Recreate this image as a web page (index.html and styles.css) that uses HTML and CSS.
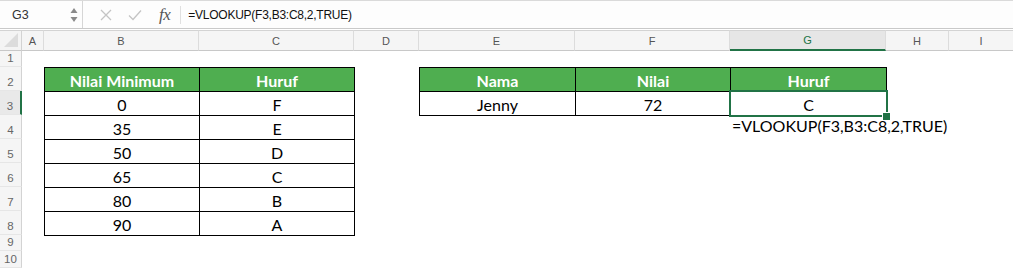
FILE: index.html
```html
<!DOCTYPE html>
<html lang="en">
<head>
  <meta charset="UTF-8" />
  <meta name="viewport" content="width=device-width, initial-scale=1" />
  <title>VLOOKUP - Nilai ke Huruf</title>
  <link rel="stylesheet" href="styles.css">
</head>
<body>
  <!-- Formula bar -->
  <div class="formula-bar">
    <div class="name-box">
      <span class="name">G3</span>
      <span class="spin">
        <svg width="8" height="16" viewBox="0 0 8 16"><path d="M4 1 L7.5 6 L0.5 6 Z" fill="#8a8a8a"/><path d="M4 15 L7.5 10 L0.5 10 Z" fill="#8a8a8a"/></svg>
      </span>
    </div>
    <div class="fb-tools">
      <svg class="tool" width="12" height="12" viewBox="0 0 12 12"><path d="M1 1 L11 11 M11 1 L1 11" stroke="#c4c4c4" stroke-width="1.3"/></svg>
      <svg class="tool" width="14" height="12" viewBox="0 0 14 12"><path d="M1 6.5 L5 10.5 L13 1.5" stroke="#c4c4c4" stroke-width="1.3" fill="none"/></svg>
      <span class="fx">fx</span>
    </div>
    <div class="formula">=VLOOKUP(F3,B3:C8,2,TRUE)</div>
  </div>

  <!-- Sheet -->
  <div class="sheet">
    <div class="corner"><svg width="14" height="14" viewBox="0 0 14 14"><path d="M14 0 L14 14 L0 14 Z" fill="#dcdcdc"/></svg></div>
    <div class="col-head">A</div>
    <div class="col-head">B</div>
    <div class="col-head">C</div>
    <div class="col-head">D</div>
    <div class="col-head">E</div>
    <div class="col-head">F</div>
    <div class="col-head active">G</div>
    <div class="col-head">H</div>
    <div class="col-head last">I</div>

    <div class="row-head r1">1</div>
    <div class="row-head r2">2</div>
    <div class="row-head r3 active">3</div>
    <div class="row-head r4">4</div>
    <div class="row-head r5">5</div>
    <div class="row-head r6">6</div>
    <div class="row-head r7">7</div>
    <div class="row-head r8">8</div>
    <div class="row-head r9">9</div>
    <div class="row-head r10">10</div>

    <div class="grade-table">
      <div class="th">Nilai Minimum</div><div class="th">Huruf</div>
      <div class="td">0</div><div class="td">F</div>
      <div class="td">35</div><div class="td">E</div>
      <div class="td">50</div><div class="td">D</div>
      <div class="td">65</div><div class="td">C</div>
      <div class="td">80</div><div class="td">B</div>
      <div class="td">90</div><div class="td">A</div>
    </div>

    <div class="lookup-table">
      <div class="th">Nama</div><div class="th">Nilai</div><div class="th">Huruf</div>
      <div class="td">Jenny</div><div class="td">72</div><div class="td selected">C</div>
    </div>

    <div class="note">=VLOOKUP(F3,B3:C8,2,TRUE)</div>
  </div>
</body>
</html>
```

FILE: styles.css
```css
* {
  box-sizing: border-box;
}

body {
  margin: 0;
  background: #fff;
  font-family: "Liberation Sans", Arial, sans-serif;
  color: #222;
  width: 1013px;
  height: 268px;
  overflow: hidden;
}

/* Formula bar */
.formula-bar {
  display: flex;
  align-items: center;
  height: 29px;
  background: #fdfdfd;
  border-top: 1px solid #dadada;
  border-bottom: 1px solid #c9c9c9;
}

.name-box {
  display: flex;
  align-items: center;
  justify-content: space-between;
  width: 83px;
  height: 100%;
  padding: 0 3px 0 12px;
  border-right: 1px solid #d6d6d6;
  font-size: 12.5px;
  color: #333;
}

.spin {
  display: flex;
  margin-right: 1px;
}

.fb-tools {
  display: flex;
  align-items: center;
  height: 18px;
  padding: 0 10px 0 17px;
  border-right: 1px solid #e0e0e0;
}

.tool {
  margin-right: 16px;
}

.tool + .tool {
  margin-right: 17px;
}

.fx {
  font-family: "Liberation Serif", "Times New Roman", serif;
  font-style: italic;
  font-size: 17px;
  color: #555;
  letter-spacing: -0.5px;
}

.formula {
  padding-left: 7px;
  font-size: 12px;
  letter-spacing: -0.25px;
  color: #111;
}

/* Sheet grid */
.sheet {
  display: grid;
  grid-template-columns: 22px 22px 155px 155px 65px 156px 155px 156px 63px 1fr;
  grid-template-rows: 21px 16px repeat(7, 24px) 16px 17px;
  margin-top: 1px;
  font-family: "Lato", "Open Sans", sans-serif;
}

.corner {
  display: flex;
  align-items: flex-end;
  justify-content: flex-end;
  padding: 0 3px 3px 0;
  background: #f4f4f4;
  border-top: 1px solid #d3d3d3;
  border-bottom: 1px solid #c8c8c8;
  border-right: 1px solid #d3d3d3;
}

.col-head {
  display: flex;
  align-items: center;
  justify-content: center;
  background: #f5f5f5;
  border-top: 1px solid #d3d3d3;
  border-bottom: 1px solid #c8c8c8;
  border-right: 1px solid #dcdcdc;
  font-family: "Liberation Sans", Arial, sans-serif;
  font-size: 11px;
  color: #555;
}

.col-head.last {
  border-right: none;
}

.col-head.active {
  background: #e6e6e6;
  color: #217346;
  border-bottom: 2px solid #217346;
}

.row-head {
  grid-column: 1;
  display: flex;
  align-items: flex-end;
  justify-content: center;
  padding-bottom: 2px;
  background: #f5f5f5;
  border-right: 1px solid #d3d3d3;
  border-bottom: 1px solid #e6e6e6;
  font-family: "Liberation Sans", Arial, sans-serif;
  font-size: 11.5px;
  color: #666;
}

.row-head.active {
  background: #e9e9e9;
  border-right: 2px solid #217346;
}

.r1 { grid-row: 2; }
.r2 { grid-row: 3; }
.r3 { grid-row: 4; }
.r4 { grid-row: 5; }
.r5 { grid-row: 6; }
.r6 { grid-row: 7; }
.r7 { grid-row: 8; }
.r8 { grid-row: 9; }
.r9 { grid-row: 10; }
.r10 { grid-row: 11; }

/* Data tables */
.grade-table,
.lookup-table {
  display: grid;
  gap: 1px;
  padding: 1px;
  background: #000;
  align-self: start;
  font-size: 16px;
}

.grade-table {
  grid-column: 3 / 5;
  grid-row: 3 / 10;
  grid-template-columns: 154px 154px;
  grid-template-rows: repeat(7, 23px);
  width: 311px;
}

.lookup-table {
  grid-column: 6 / 9;
  grid-row: 3 / 5;
  grid-template-columns: 155px 154px 155px;
  grid-template-rows: repeat(2, 23px);
  width: 468px;
}

.th,
.td {
  display: flex;
  align-items: center;
  justify-content: center;
  padding-top: 1px;
}

.th {
  background: #4fae50;
  color: #fff;
  font-weight: 700;
}

.td {
  background: #fff;
  color: #000;
}

.td.selected {
  position: relative;
}

.td.selected::after {
  content: "";
  position: absolute;
  inset: -2px -2px -2px -2px;
  border: 2px solid #217346;
}

.td.selected::before {
  content: "";
  position: absolute;
  right: -5px;
  bottom: -6px;
  width: 7px;
  height: 7px;
  background: #217346;
  border: 1px solid #fff;
  z-index: 1;
}

.note {
  grid-column: 8;
  grid-row: 5;
  padding: 1px 0 0 2px;
  white-space: nowrap;
  font-size: 16px;
  color: #000;
}
```
